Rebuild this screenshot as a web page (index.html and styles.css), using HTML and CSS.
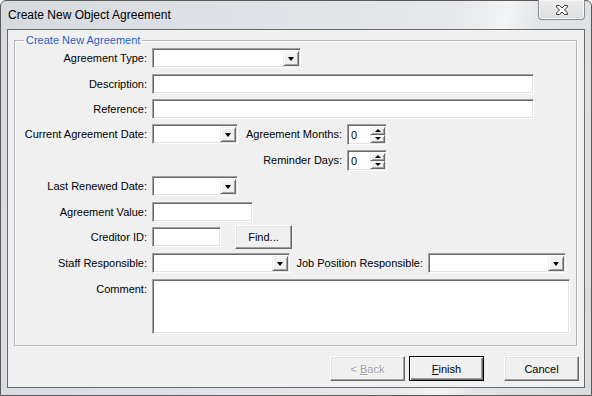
FILE: index.html
```html
<!DOCTYPE html>
<html>
<head>
<meta charset="utf-8">
<link rel="stylesheet" href="styles.css">
</head>
<body>
<div class="window">
  <div class="titlebar">
    <span class="title">Create New Object Agreement</span>
    <div class="close">
      <svg width="14" height="10" viewBox="0 0 14 10"><path d="M1.5 0.5h3l2.5 2.5 2.5-2.5h3v1.5l-3 3 3 3v1.5h-3l-2.5-2.5-2.5 2.5h-3v-1.5l3-3-3-3z" fill="#fff" stroke="#3c3c3c" stroke-width="1" stroke-linejoin="round"/></svg>
    </div>
  </div>
  <div class="client">
    <fieldset class="group">
      <legend>Create New Agreement</legend>
      <div class="row">
        <span class="lbl">Agreement Type:</span>
        <div class="field combo w-type"><span class="drop"><i class="tri-down"></i></span></div>
      </div>
      <div class="row sp6">
        <span class="lbl">Description:</span>
        <div class="field w-long"></div>
      </div>
      <div class="row sp5">
        <span class="lbl">Reference:</span>
        <div class="field w-long"></div>
      </div>
      <div class="row sp5">
        <span class="lbl">Current Agreement Date:</span>
        <div class="field combo w-date"><span class="drop"><i class="tri-down"></i></span></div>
        <span class="sublbl w-sub1">Agreement Months:</span>
        <div class="field spin"><span class="val">0</span><span class="spinbtn"><span class="half"><i class="tri-up"></i></span><span class="half"><i class="tri-down"></i></span></span></div>
      </div>
      <div class="row sp6">
        <span class="lbl"></span>
        <span class="spacer w-date"></span>
        <span class="sublbl w-sub1">Reminder Days:</span>
        <div class="field spin"><span class="val">0</span><span class="spinbtn"><span class="half"><i class="tri-up"></i></span><span class="half"><i class="tri-down"></i></span></span></div>
      </div>
      <div class="row sp6">
        <span class="lbl">Last Renewed Date:</span>
        <div class="field combo w-date"><span class="drop"><i class="tri-down"></i></span></div>
      </div>
      <div class="row sp6">
        <span class="lbl">Agreement Value:</span>
        <div class="field w-value"></div>
      </div>
      <div class="row sp5">
        <span class="lbl">Creditor ID:</span>
        <div class="field w-cred"></div>
        <button class="btn find">Find...</button>
      </div>
      <div class="row sp6">
        <span class="lbl">Staff Responsible:</span>
        <div class="field combo w-staff"><span class="drop"><i class="tri-down"></i></span></div>
        <span class="sublbl w-sub2">Job Position Responsible:</span>
        <div class="field combo w-job"><span class="drop"><i class="tri-down"></i></span></div>
      </div>
      <div class="row sp6 row-top">
        <span class="lbl lbl-top">Comment:</span>
        <div class="field memo"></div>
      </div>
    </fieldset>
    <div class="buttons">
      <button class="btn disabled">&lt; <u>B</u>ack</button>
      <button class="btn default"><u>F</u>inish</button>
      <button class="btn cancel">Cancel</button>
    </div>
  </div>
</div>
</body>
</html>
```
FILE: styles.css
```css
* { box-sizing: border-box; }
html, body { margin: 0; padding: 0; background: #fff; }
body { font-family: "Liberation Sans", Arial, sans-serif; font-size: 11px; color: #000; }

.window {
  width: 592px;
  height: 396px;
  display: flex;
  flex-direction: column;
  border: 1px solid #5a5a5a;
  border-radius: 6px 6px 0 0;
  background: linear-gradient(100deg, #d6d9dd 0%, #dfe2e6 40%, #e6e8eb 70%, #f3f4f5 77%, #e2e5e8 82%, #d9dcdf 100%);
  padding: 0 6px 7px 6px;
}

.titlebar {
  height: 28px;
  display: flex;
  align-items: flex-start;
  justify-content: space-between;
}
.title {
  font-size: 12px;
  color: #000;
  padding: 8px 0 0 1px;
  line-height: 13px;
}
.close {
  width: 47px;
  height: 20px;
  margin-right: 0;
  margin-top: -1px;
  border: 1px solid #8c8c8c;
  border-top: none;
  border-radius: 0 0 4px 4px;
  background: linear-gradient(#ececec, #dcdee1);
  box-shadow: inset 0 0 0 1px #f6f6f6;
  display: flex;
  align-items: center;
  justify-content: center;
}

.client {
  flex: 1;
  border: 1px solid #6a6a6a;
  background: #f0f0f0;
  display: flex;
  flex-direction: column;
}

.group {
  margin: 3px 7px 0 6px;
  padding: 1px 0 11px 0;
  border: 1px solid #b4b4b4;
  box-shadow: 1px 1px 0 #fff, inset 1px 1px 0 #fff;
  min-width: 0;
}
.group legend {
  margin-left: 9px;
  padding: 0 2px;
  color: #1f60c8;
  line-height: 14px;
  font-size: 11px;
}

.row {
  display: flex;
  align-items: center;
  height: 20px;
}
.row-top { align-items: flex-start; height: auto; }
.sp5 { margin-top: 5px; }
.sp6 { margin-top: 6px; }

.lbl {
  width: 132px;
  flex: none;
  text-align: right;
  margin-right: 5px;
  white-space: nowrap;
  line-height: 13px;
}
.lbl-top { padding-top: 4px; }
.sublbl {
  flex: none;
  text-align: right;
  white-space: nowrap;
  margin-right: 5px;
  line-height: 13px;
}
.w-sub1 { width: 104px; }
.w-sub2 { width: 133px; }

.field {
  flex: none;
  height: 20px;
  background: #fff;
  border: 1px solid;
  border-color: #a0a0a0 #fff #fff #a0a0a0;
  box-shadow: inset 1px 1px 0 #696969, inset -1px -1px 0 #e3e3e3;
  position: relative;
}
.w-type { width: 149px; }
.w-long { width: 382px; }
.w-date { width: 86px; }
.w-value { width: 101px; }
.w-cred { width: 69px; }
.w-staff { width: 138px; }
.w-job { width: 138px; }
.spacer { flex: none; }

.combo { display: flex; justify-content: flex-end; padding: 2px 1px 1px 2px; }
.drop {
  width: 16px;
  height: 15px;
  background: #f0f0f0;
  border: 1px solid;
  border-color: #f0f0f0 #696969 #696969 #f0f0f0;
  box-shadow: inset 1px 1px 0 #fff, inset -1px -1px 0 #a0a0a0;
  display: flex;
  align-items: center;
  justify-content: center;
}
.tri-down {
  width: 0; height: 0;
  border-left: 3.5px solid transparent;
  border-right: 3.5px solid transparent;
  border-top: 4px solid #000;
}
.tri-up {
  width: 0; height: 0;
  border-left: 3.5px solid transparent;
  border-right: 3.5px solid transparent;
  border-bottom: 4px solid #000;
}

.spin {
  width: 40px;
  height: 21px;
  display: flex;
  justify-content: space-between;
  padding: 2px 1px 1px 2px;
}
.spin .val { line-height: 16px; padding-left: 1px; color: #000; }
.spinbtn { width: 15px; display: flex; flex-direction: column; }
.spin .half {
  flex: 1;
  background: #f0f0f0;
  border: 1px solid;
  border-color: #f0f0f0 #696969 #696969 #f0f0f0;
  box-shadow: inset 1px 1px 0 #fff, inset -1px -1px 0 #a0a0a0;
  display: flex;
  align-items: center;
  justify-content: center;
}
.spin .half .tri-up, .spin .half .tri-down { border-left-width: 3px; border-right-width: 3px; }
.spin .half .tri-up { border-bottom-width: 3px; }
.spin .half .tri-down { border-top-width: 3px; }

.memo { width: 418px; height: 55px; }

.btn {
  font-family: "Liberation Sans", Arial, sans-serif;
  font-size: 11px;
  color: #000;
  background: #f0f0f0;
  border: 1px solid;
  border-color: #fff #696969 #696969 #fff;
  box-shadow: inset -1px -1px 0 #a0a0a0, inset 1px 1px 0 #e3e3e3;
  padding: 0;
  height: 24px;
  flex: none;
}
.find { width: 57px; margin-left: 14px; height: 24px; }

.buttons {
  display: flex;
  justify-content: flex-end;
  margin-top: 10px;
  padding-right: 5px;
}
.buttons .btn { width: 75px; height: 25px; }
.btn.disabled {
  color: #a0a0a0;
  text-shadow: 1px 1px 0 #fff;
}
.btn.default {
  margin-left: 4px;
  border: 1px solid #000;
  box-shadow: inset 1px 1px 0 #fff, inset -1px -1px 0 #696969, inset -2px -2px 0 #a0a0a0;
}
.btn.cancel { margin-left: 20px; }
.btn u { text-decoration: underline; text-underline-offset: 1px; }
```
